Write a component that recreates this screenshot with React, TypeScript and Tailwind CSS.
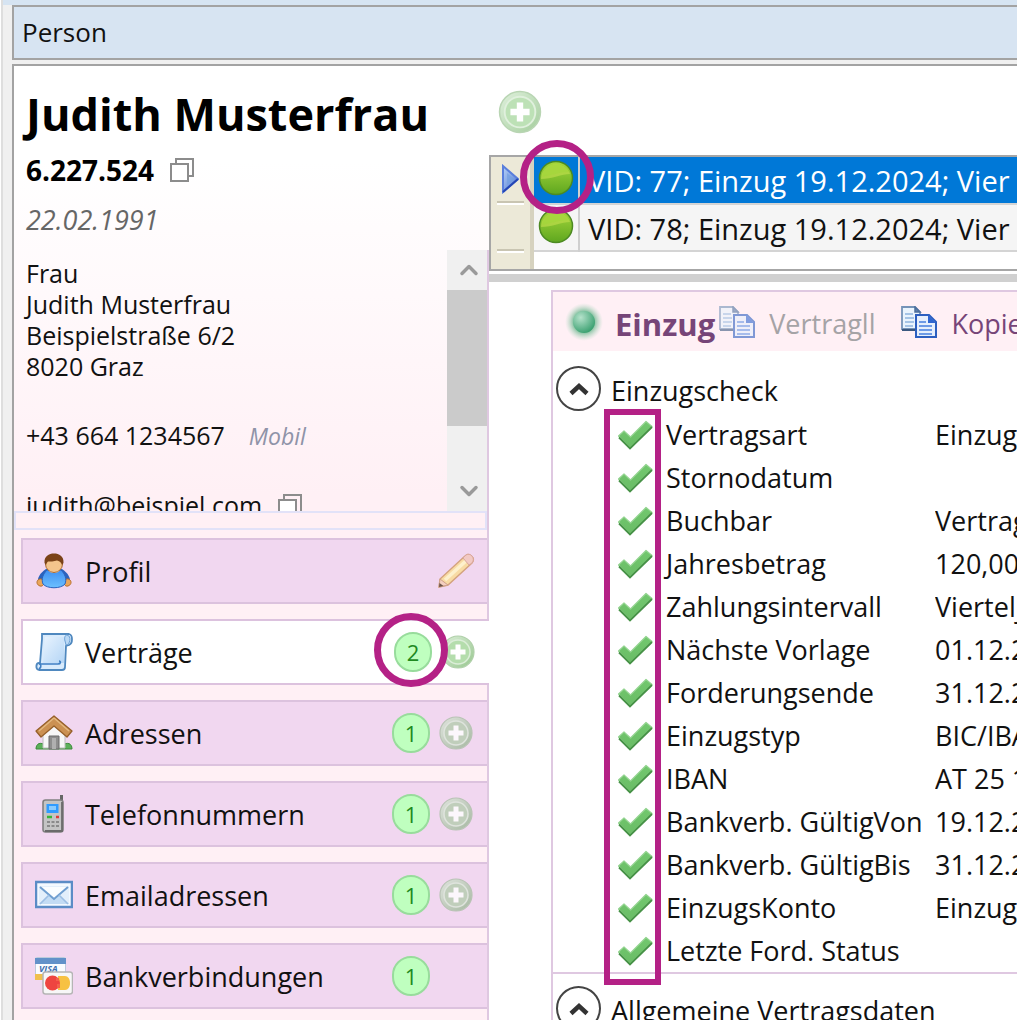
import type { ReactNode } from 'react';
import { ChevronDown, ChevronUp } from 'lucide-react';
import clsx from 'clsx';

interface MenuEntry {
  label: string;
  icon: ReactNode;
  count?: number;
  action?: 'add' | 'edit';
  active?: boolean;
}

const MENU: MenuEntry[] = [
  { label: 'Profil', icon: <UserIcon />, action: 'edit' },
  { label: 'Verträge', icon: <ScrollIcon />, count: 2, action: 'add', active: true },
  { label: 'Adressen', icon: <HouseIcon />, count: 1, action: 'add' },
  { label: 'Telefonnummern', icon: <PhoneIcon />, count: 1, action: 'add' },
  { label: 'Emailadressen', icon: <MailIcon />, count: 1, action: 'add' },
  { label: 'Bankverbindungen', icon: <CardsIcon />, count: 1 },
];

const CONTRACTS = [
  { id: 77, text: 'VID: 77; Einzug 19.12.2024; Vier' },
  { id: 78, text: 'VID: 78; Einzug 19.12.2024; Vier' },
];

const CHECKS: [string, string][] = [
  ['Vertragsart', 'Einzug'],
  ['Stornodatum', ''],
  ['Buchbar', 'Vertrag'],
  ['Jahresbetrag', '120,00'],
  ['Zahlungsintervall', 'Viertelj'],
  ['Nächste Vorlage', '01.12.2'],
  ['Forderungsende', '31.12.2'],
  ['Einzugstyp', 'BIC/IBA'],
  ['IBAN', 'AT 25 1'],
  ['Bankverb. GültigVon', '19.12.2'],
  ['Bankverb. GültigBis', '31.12.2'],
  ['EinzugsKonto', 'Einzug'],
  ['Letzte Ford. Status', ''],
];

export default function App() {
  return (
    <div className="h-screen overflow-hidden bg-white pb-1 pr-0.5 pl-px font-['Open_Sans','Noto_Sans',sans-serif] text-[27px] leading-8 text-[#111]">
      <IconDefs />
      <div className="flex h-full flex-col overflow-hidden border-l-2 border-[#dedede] bg-[#f0f0f0]">
        <div className="h-[5px] shrink-0 bg-[#d6e4f2]" />
        <header className="ml-[9px] h-[55px] shrink-0 border-2 border-r-0 border-[#a3a3a3] bg-[#d7e4f2] px-2 pt-[9px] text-[26px]">
          Person
        </header>
        <div className="mt-1 ml-[9px] flex min-h-0 flex-1 border-t-2 border-l-2 border-[#a3a3a3] bg-white">
          <Sidebar />
          <main className="flex min-w-0 flex-1 flex-col">
            <div className="flex h-[89px] shrink-0 items-center px-2 pt-0.5">
              <button type="button" aria-label="Vertrag hinzufügen">
                <PlusIcon className="size-[46px] opacity-70" />
              </button>
            </div>
            <ContractList />
            <div className="mt-[3px] h-2 shrink-0 bg-[#d0d0d0]" />
            <ContractDetails />
          </main>
        </div>
      </div>
    </div>
  );
}

function Sidebar() {
  return (
    <aside className="flex w-[475px] shrink-0 flex-col overflow-hidden bg-gradient-to-b from-white from-10% to-[#fff0f5] to-45%">
      <div className="h-[184px] shrink-0 px-3 pt-5 text-black">
        <h1 className="text-[45px] leading-[56px] font-bold">Judith Musterfrau</h1>
        <p className="mt-3 flex items-center gap-4 text-[28px] leading-8 font-bold">
          6.227.524
          <CopyButton />
        </p>
        <p className="mt-4 leading-9 text-[#666] italic">22.02.1991</p>
      </div>

      <div className="flex h-[261px] shrink-0 border-r-2 border-[#dfc8e1]">
        <div className="min-w-0 flex-1 overflow-hidden px-3 pt-2 text-[25px] leading-[31px]">
          <address className="not-italic">
            Frau
            <br />
            Judith Musterfrau
            <br />
            Beispielstraße 6/2
            <br />
            8020 Graz
          </address>
          <p className="mt-[38px] flex items-baseline gap-6">
            +43 664 1234567
            <span className="text-[23px] text-[#8f93a8] italic">Mobil</span>
          </p>
          <p className="mt-[38px] flex items-center gap-4">
            judith@beispiel.com
            <CopyButton />
          </p>
        </div>
        <div className="flex w-10 flex-col bg-[#f0f0f0] text-[#9a9a9a]">
          <button type="button" aria-label="Nach oben" className="flex h-10 items-center justify-center pl-1">
            <ChevronUp size={28} strokeWidth={3} />
          </button>
          <div className="h-[136px] bg-[#cbcbcb]" />
          <button type="button" aria-label="Nach unten" className="mt-auto flex h-10 items-center justify-center pl-1">
            <ChevronDown size={28} strokeWidth={3} />
          </button>
        </div>
      </div>

      <div className="h-[27px] shrink-0 border-r-2 border-[#dfc8e1] pb-2">
        <div className="h-full border-2 border-[#e2e2f8]" />
      </div>

      <nav className="flex flex-1 flex-col gap-[15px] border-r-2 border-[#dfc8e1] pl-[7px]">
        {MENU.map((entry) => (
          <MenuItem key={entry.label} {...entry} />
        ))}
      </nav>
    </aside>
  );
}

function MenuItem({ label, icon, count, action, active }: MenuEntry) {
  return (
    <div
      className={clsx(
        'relative flex h-[66px] shrink-0 items-center border-2 border-r-0 border-[#dcc2de] pl-3',
        active ? '-mr-0.5 bg-white' : 'bg-[#f1d7f0]'
      )}
    >
      <a href="#" className="flex flex-1 items-center gap-3">
        {icon}
        <span className="pt-0.5">{label}</span>
      </a>
      {count !== undefined && (
        <span
          className={clsx(
            'relative flex h-10 w-[38px] items-center justify-center rounded-full border-2 border-[#98dc9c] bg-[#bfffbf] text-[22px] text-[#1f8a1f]',
            action ? 'mr-2' : 'mr-[57px]'
          )}
        >
          {count}
          {active && (
            <span className="absolute top-1/2 left-1/2 z-10 size-[74px] -translate-x-[39px] -translate-y-[39px] rounded-full border-[7px] border-[#b42186]" />
          )}
        </span>
      )}
      {action === 'add' && (
        <button type="button" aria-label={`${label} hinzufügen`} className="mr-[13px]">
          <PlusIcon className={clsx('size-9', active ? 'opacity-80' : 'opacity-80 saturate-50')} />
        </button>
      )}
      {action === 'edit' && (
        <button type="button" aria-label={`${label} bearbeiten`} className="mr-3">
          <PencilIcon />
        </button>
      )}
    </div>
  );
}

function ContractList() {
  return (
    <div className="h-[116px] shrink-0 border-2 border-r-0 border-[#a6a6a6] bg-white">
      <div className="flex h-full">
        <div className="w-[43px] shrink-0 border-r-4 border-[#d6d2bf] bg-[#ece9d8] px-1.5">
          <div className="flex h-[46px] items-center border-b-2 border-[#c9c5b2] pl-1">
            <svg viewBox="0 0 18 30" className="h-[30px] w-[18px]">
              <path d="M2 2v26l15-13z" fill="url(#arrow)" stroke="#5a7fdc" strokeWidth="2" />
              <path d="M6 9v12l7-6z" fill="#6f9fe0" opacity=".6" />
              <path d="M2 28 17 15" stroke="#2446b4" strokeWidth="2" />
            </svg>
          </div>
          <div className="h-12 border-t-2 border-b-2 border-t-white border-b-[#c9c5b2]" />
          <div className="h-0.5 bg-white" />
        </div>
        <table className="h-[95px] w-full table-fixed border-collapse text-[29px]">
          <tbody>
            {CONTRACTS.map((contract, i) => (
              <tr
                key={contract.id}
                className={clsx(
                  'border-b-2 border-[#d4d4d4]',
                  i === 0 ? 'bg-[#0078d7] text-white' : 'bg-[#f5f5f5]'
                )}
              >
                <td className="h-[47px] w-[45px] border-r-2 border-[#cfcfcf] p-0">
                  <div className="relative flex justify-center">
                    <BallIcon />
                    {i === 0 && (
                      <span className="absolute top-1/2 left-1/2 z-10 size-[74px] -translate-x-[36px] -translate-y-[40px] rounded-full border-[7px] border-[#b42186]" />
                    )}
                  </div>
                </td>
                <td className="overflow-hidden p-0 pt-0.5 pl-2 whitespace-nowrap">{contract.text}</td>
              </tr>
            ))}
          </tbody>
        </table>
      </div>
    </div>
  );
}

function ContractDetails() {
  return (
    <div className="mt-2 ml-[62px] min-h-0 flex-1 overflow-hidden border-t-2 border-l-2 border-[#dfc8e1] bg-white">
      <div className="flex h-[59px] items-center overflow-hidden bg-[#fff0f5] pl-3 whitespace-nowrap text-[#764578]">
        <GlowIcon />
        <h2 className="ml-3 pt-1 text-[31px] font-bold">Einzug</h2>
        <button type="button" disabled className="ml-1 flex items-center gap-3.5 text-[#a5a3a6]">
          <CopyDocsIcon className="opacity-60" />
          <span className="pt-1">Vertragll</span>
        </button>
        <button type="button" className="ml-[26px] flex items-center gap-3.5">
          <CopyDocsIcon />
          <span className="pt-1">Kopie</span>
        </button>
      </div>

      <section className="pt-[3px]">
        <SectionTitle>Einzugscheck</SectionTitle>
        <div className="relative border-b-2 border-[#dfc8e1]">
          <table className="w-full table-fixed border-collapse">
            <tbody>
              {CHECKS.map(([label, value]) => (
                <tr key={label} className="h-[43px]">
                  <td className="w-[113px] p-0">
                    <CheckIcon />
                  </td>
                  <th scope="row" className="w-[269px] p-0 text-left font-normal whitespace-nowrap">
                    {label}
                  </th>
                  <td className="overflow-hidden p-0 whitespace-nowrap">{value}</td>
                </tr>
              ))}
            </tbody>
          </table>
          <div className="absolute -top-1 -bottom-[13px] left-[51px] w-[57px] border-[6px] border-[#b42186]" />
        </div>
      </section>

      <section>
        <SectionTitle>Allgemeine Vertragsdaten</SectionTitle>
      </section>
    </div>
  );
}

function SectionTitle({ children }: { children: ReactNode }) {
  return (
    <h3 className="flex h-[59px] items-start gap-2.5 overflow-hidden pt-3 pl-[3px] whitespace-nowrap">
      <button
        type="button"
        aria-label="Einklappen"
        className="flex size-[45px] shrink-0 items-center justify-center rounded-full border-2 border-[#444]"
      >
        <svg viewBox="0 0 20 14" className="h-3.5 w-5">
          <path d="M2 11.5 10 4l8 7.500" fill="none" stroke="#333" strokeWidth="4.500" />
        </svg>
      </button>
      <span className="pt-[9px]">{children}</span>
    </h3>
  );
}

function CopyButton() {
  return (
    <button type="button" aria-label="Kopieren">
      <svg viewBox="0 0 24 24" className="size-6" fill="none" stroke="#8c8c8c" strokeWidth="2">
        <path d="M6 5V1h17v17h-4" />
        <rect x="1" y="6" width="17" height="17" fill="#fff" />
      </svg>
    </button>
  );
}

function IconDefs() {
  return (
    <svg className="absolute size-0" aria-hidden="true">
      <defs>
        <linearGradient id="plus" x1="0" y1="0" x2="1" y2="1">
          <stop offset="0" stopColor="#d3ebcf" />
          <stop offset="1" stopColor="#7fba74" />
        </linearGradient>
        <linearGradient id="arrow" x1="0" y1="0" x2="1" y2="1">
          <stop offset="0" stopColor="#b9d4f8" />
          <stop offset="1" stopColor="#4a72d0" />
        </linearGradient>
        <linearGradient id="ball" x1="0" y1="0" x2="0" y2="1">
          <stop offset="0" stopColor="#a8d93c" />
          <stop offset="1" stopColor="#5ea61f" />
        </linearGradient>
        <linearGradient id="check" x1="0" y1="0" x2="0" y2="1">
          <stop offset="0" stopColor="#72c86e" />
          <stop offset="1" stopColor="#6abc66" />
        </linearGradient>
        <linearGradient id="paper" x1="0" y1="0" x2="1" y2="1">
          <stop offset="0" stopColor="#e8f3fe" />
          <stop offset="1" stopColor="#b5d6f6" />
        </linearGradient>
        <linearGradient id="shirt" x1="0" y1="0" x2="0" y2="1">
          <stop offset="0" stopColor="#3f8ff0" />
          <stop offset="1" stopColor="#6cc0ff" />
        </linearGradient>
        <radialGradient id="glow">
          <stop offset=".5" stopColor="#6fb890" />
          <stop offset="1" stopColor="#b9dcc8" stopOpacity="0" />
        </radialGradient>
        <radialGradient id="bead" cx=".35" cy=".3" r=".8">
          <stop offset="0" stopColor="#b5e2cb" />
          <stop offset="1" stopColor="#2f9a68" />
        </radialGradient>
      </defs>
    </svg>
  );
}

function PlusIcon({ className }: { className: string }) {
  return (
    <svg viewBox="0 0 36 36" className={className}>
      <circle cx="18" cy="18" r="16" fill="url(#plus)" stroke="#9cc494" strokeWidth="1.200" />
      <circle cx="18" cy="18" r="12" fill="#a2d598" stroke="#d3eacf" strokeWidth="1.500" />
      <path d="M15.500 10.500h5v5h5v5h-5v5h-5v-5h-5v-5h5z" fill="#fff" />
    </svg>
  );
}

function BallIcon() {
  return (
    <svg viewBox="0 0 36 36" className="mb-1 size-9">
      <circle cx="18" cy="18" r="16.500" fill="url(#ball)" stroke="#4c8a22" strokeWidth="1.500" />
      <path d="M3 19a15 15 0 0 1 29-5C24 14 14 19 3 19z" fill="#c3e04e" opacity=".6" />
      <path d="M5 12a15 15 0 0 1 26 0C22 12 14 15 4 17z" fill="#a3d63a" opacity=".7" />
    </svg>
  );
}

function CheckIcon() {
  return (
    <svg viewBox="0 0 36 30" className="ml-16 h-[30px] w-9">
      <path
        d="M1.500 16 7 11l6.500 6L29 1.500l6 5L13 28z"
        fill="url(#check)"
        stroke="#93d490"
        strokeWidth="1.200"
        strokeLinejoin="round"
      />
      <path d="M2 17.500 13 28.500 35 7" fill="none" stroke="#479247" strokeWidth="1.800" />
    </svg>
  );
}

function GlowIcon() {
  return (
    <svg viewBox="0 0 38 38" className="size-[38px] shrink-0">
      <circle cx="19" cy="19" r="19" fill="url(#glow)" />
      <circle cx="19" cy="19" r="11" fill="url(#bead)" />
    </svg>
  );
}

function CopyDocsIcon({ className }: { className?: string }) {
  return (
    <svg viewBox="0 0 36 32" className={clsx('h-8 w-9 shrink-0', className)}>
      <path d="M1 1h13l5 5v17H1z" fill="#eaf4fd" stroke="#7593b8" strokeWidth="1.800" />
      <path d="M1 24h14" stroke="#3b587f" strokeWidth="2" />
      <path d="M14 1v5h5z" fill="#5d7fae" stroke="#4d6f9c" strokeWidth="1.500" />
      <path d="M4 8h8M4 12h9M4 16h9M4 20h8" stroke="#8fb4de" strokeWidth="1.500" />
      <path d="M15 9h13l7 7v15H15z" fill="#e6effc" stroke="#2c5fc0" strokeWidth="2" />
      <path d="M27 9v8h8z" fill="#2f66d0" />
      <path d="M18 16h7M18 20h13M18 24h13M18 28h13" stroke="#6d9ae6" strokeWidth="1.800" />
    </svg>
  );
}

function UserIcon() {
  return (
    <svg viewBox="0 0 38 38" className="size-[38px]">
      <path d="M11 17C5 21 2 26 3 31c2 3 6 3 7 0h18c1 3 5 3 7 0 1-5-2-10-8-14z" fill="#2a62bd" />
      <path d="M3 28c2-2 5-1 6 1s-1 6-4 5-4-4-2-6zM35 28c-2-2-5-1-6 1s1 6 4 5 4-4 2-6z" fill="#eaa65c" stroke="#b86f2c" />
      <path d="M12 18h14c4 4 6 9 4 14-4 5-18 5-22 0-2-5 0-10 4-14z" fill="url(#shirt)" stroke="#2a62bd" />
      <path d="M13 18c2 4 10 4 12 0z" fill="#fff" />
      <circle cx="19" cy="12" r="8.500" fill="#f3c48c" stroke="#a9682f" />
      <path d="M9.500 11C9 4 14 1.500 19 1.500S29 4 28.500 11l-1.500 2c-1-3-3-4-5-4.500-3 1-7 1-9 1-1 1-1.500 2-2 3.500z" fill="#7a4218" />
    </svg>
  );
}

function ScrollIcon() {
  return (
    <svg viewBox="0 0 38 38" className="size-[38px]">
      <path
        d="M7 1h27c4 1 4 9 0 11l-3 1-1 21c0 2-1 3-3 3H4c-4-1-3-7 0-7h1L7 6z"
        fill="#d9ebfc"
        stroke="#4f88bf"
        strokeWidth="1.800"
      />
      <path d="M10 4h19v26H8z" fill="url(#paper)" />
      <path d="M32 2c-2 0-3 3-2 6l1 4c4 0 6-9 1-10z" fill="#b9d8f5" stroke="#6a9fd4" />
      <path d="M4 31h19c3 0 3-3 1-3M4 31c2 0 3 3 0 5" fill="none" stroke="#3f7fc4" strokeWidth="1.600" />
    </svg>
  );
}

function HouseIcon() {
  return (
    <svg viewBox="0 0 38 38" className="size-[38px]">
      <path d="M1 35c0-6 5-7 9-4h18c4-3 9-2 9 4z" fill="#5cb05a" stroke="#3c8a3c" />
      <path d="M8 17 19 8l11 9v17H8z" fill="#f7f7f7" stroke="#bdbdbd" />
      <path d="M14 22h10v13H14z" fill="#8e8e8e" stroke="#6b6b6b" />
      <path d="M17 24h4v11h-4z" fill="#b0b0b0" />
      <path d="M19 2 1 17l5 6L19 12l13 11 5-6z" fill="#cb9152" stroke="#96602a" strokeWidth="1.300" strokeLinejoin="round" />
      <path d="M19 4 4 17M19 4l15 13" stroke="#e4b981" strokeWidth="1.300" />
    </svg>
  );
}

function PhoneIcon() {
  return (
    <svg viewBox="0 0 38 38" className="size-[38px]">
      <path d="M25 0h3v8h-3z" fill="#666" />
      <rect x="8" y="5" width="20" height="32" rx="2.500" fill="#c4c4c4" stroke="#808080" strokeWidth="1.600" />
      <path d="M27 7v29H10" fill="none" stroke="#6a6a6a" strokeWidth="1.800" />
      <rect x="11.500" y="9" width="12" height="9" fill="#2f9bff" />
      <rect x="14" y="11" width="7" height="4" fill="#8accff" />
      <path d="M12 22h5" stroke="#38b538" strokeWidth="2.500" />
      <path d="M21 22h3" stroke="#dc3b3b" strokeWidth="2.500" />
      <path d="M12 27h12M12 31h12" stroke="#8a8a8a" strokeWidth="2" strokeDasharray="3 1.500" />
    </svg>
  );
}

function MailIcon() {
  return (
    <svg viewBox="0 0 38 38" className="size-[38px]">
      <rect x="1" y="6" width="36" height="25" fill="#f3f9ff" stroke="#5b8cc6" strokeWidth="2.500" />
      <path d="M4 10h30v18H4z" fill="#e3effb" />
      <path d="M4 28 14 19l5 4 5-4 10 9z" fill="#c3dcf4" />
      <path d="M5 11 19 23 33 11" fill="#fafdff" stroke="#6f9ed0" strokeWidth="2" />
      <path d="M5 28 14 19M33 28l-9-9" stroke="#9dbfe4" strokeWidth="1.600" />
    </svg>
  );
}

function CardsIcon() {
  return (
    <svg viewBox="0 0 38 38" className="size-[38px]">
      <rect x=".5" y=".5" width="30" height="22" rx="1" fill="#fafcff" stroke="#bccbdc" />
      <path d="M0 1h31v6H0z" fill="#6291c9" />
      <path d="M0 17h10v6H0z" fill="#f0c04d" />
      <text x="4" y="15" fontSize="9" fontWeight="bold" fontStyle="italic" fill="#3f6fae">
        VISA
      </text>
      <rect x="8" y="15" width="29.500" height="22" rx="2.500" fill="#f7f7f7" stroke="#b5b5b5" strokeWidth="1.500" />
      <path d="M23 19h7c3 0 5 3 5 7s-2 7-5 7h-7z" fill="#f7c143" />
      <circle cx="17.500" cy="26" r="7.500" fill="#ee4540" />
      <path d="M22.500 21v3M23.500 27v4" stroke="#f4604a" strokeWidth="3" />
    </svg>
  );
}

function PencilIcon() {
  return (
    <svg viewBox="0 0 38 36" className="h-9 w-[38px]">
      <path d="M2 34l1-8L28 3c4-4 11 2 7 7L11 32z" fill="#f8dba4" stroke="#d3a27e" strokeWidth="1.400" />
      <path d="M8 27 30 7" stroke="#fdf0cc" strokeWidth="3.500" />
      <path d="M26 5l3-3c4-3 10 3 6 8l-3 2z" fill="#f2c9c4" stroke="#d9a69c" />
      <path d="M3 26l8 6-9 2z" fill="#f3cfc0" stroke="#cfa08a" />
      <path d="M2 34l.5-4 4 3z" fill="#6b5348" />
    </svg>
  );
}
